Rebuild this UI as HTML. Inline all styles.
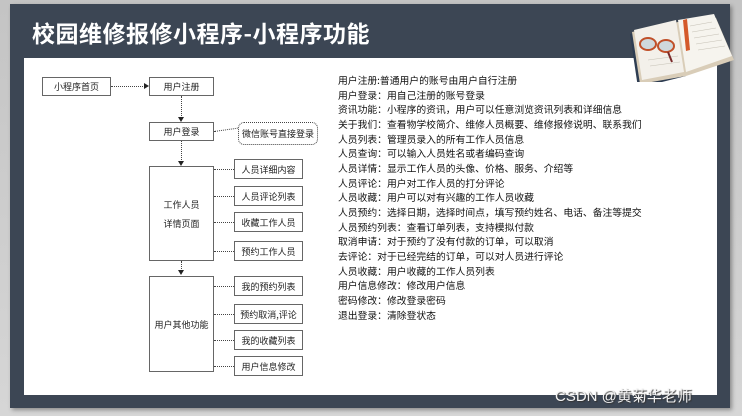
<!DOCTYPE html>
<html><head><meta charset="utf-8"><style>
*{margin:0;padding:0;box-sizing:border-box}
body{width:742px;height:416px;background:linear-gradient(#c4c4c4,#d6d6d6);position:relative;overflow:hidden;font-family:"Liberation Sans","Noto Sans CJK SC",sans-serif}
#slide{position:absolute;left:10px;top:4px;width:720px;height:404px;background:#3c4654;box-shadow:2px 2px 4px rgba(0,0,0,.35)}
#white{position:absolute;left:24px;top:58px;width:693px;height:337px;background:#fff}
h1{position:absolute;left:32px;top:17px;color:#fff;font-size:23px;font-weight:bold;letter-spacing:0.5px;font-family:"Noto Sans CJK SC",sans-serif;line-height:30px}
.b{position:absolute;border:1px solid #666;background:#fff;font-size:9px;color:#222;display:flex;align-items:center;justify-content:center;font-family:"Noto Sans CJK SC",sans-serif}
.h{position:absolute;border-top:1px dotted #444;height:0}
.v{position:absolute;border-left:1px dotted #444;width:0}
#txt{position:absolute;left:338px;top:73px;font-size:9.8px;line-height:14.65px;color:#111;font-family:"Noto Sans CJK SC",sans-serif;white-space:nowrap}
#wm{position:absolute;left:555px;top:385px;color:#f4f4f4;font-size:15px;text-shadow:1px 1px 1px #333;font-family:"Liberation Sans","Noto Sans CJK SC",sans-serif}
</style></head><body>
<div id="slide"></div>
<div id="white"></div>
<h1>校园维修报修小程序-小程序功能</h1>
<svg style="position:absolute;left:628px;top:10px" width="110" height="72" viewBox="0 0 110 72">
<polygon points="2,24 52,14 58,66 10,78" fill="#2e3d52"/>
<polygon points="4,22 50,12 88,8 106,50 58,66 12,74" fill="#d9cdb8"/>
<polygon points="6,20 48,10 56,62 14,70" fill="#f3f0ea"/>
<polygon points="50,10 86,4 104,46 58,62" fill="#f6f4ee"/>
<polygon points="55,10 59,9 62,40 58,41" fill="#d4592a"/>
<g stroke="#c5c0b5" stroke-width="0.6"><line x1="62" y1="16" x2="84" y2="12"/><line x1="64" y1="22" x2="88" y2="18"/><line x1="66" y1="28" x2="91" y2="24"/><line x1="68" y1="34" x2="94" y2="30"/><line x1="70" y1="40" x2="97" y2="36"/><line x1="20" y1="50" x2="50" y2="46"/><line x1="22" y1="56" x2="52" y2="52"/></g>
<ellipse cx="20" cy="34" rx="8" ry="6" fill="#cfd8dc" stroke="#c0502a" stroke-width="2"/>
<ellipse cx="38" cy="36" rx="8" ry="6" fill="#cfd8dc" stroke="#c0502a" stroke-width="2"/>
<line x1="40" y1="42" x2="44" y2="52" stroke="#7a2a2a" stroke-width="2"/>
</svg>

<div class="b" style="left:42px;top:77px;width:69px;height:19px">小程序首页</div>
<div class="h" style="left:111px;top:86px;width:36px"></div>
<div style="position:absolute;left:144px;top:83px;border-left:5px solid #222;border-top:3px solid transparent;border-bottom:3px solid transparent"></div>
<div class="b" style="left:149px;top:77px;width:65px;height:19px">用户注册</div>
<div class="v" style="left:181px;top:96px;height:22px"></div>
<div style="position:absolute;left:178px;top:117px;border-top:5px solid #222;border-left:3px solid transparent;border-right:3px solid transparent"></div>
<div class="b" style="left:149px;top:122px;width:65px;height:19px">用户登录</div>
<div class="h" style="left:214px;top:131px;width:24px;transform:rotate(-8deg);transform-origin:left"></div>
<div class="b" style="left:238px;top:122px;width:80px;height:23px;border:1px dotted #444;border-radius:6px">微信账号直接登录</div>
<div class="v" style="left:181px;top:141px;height:21px"></div>
<div style="position:absolute;left:178px;top:161px;border-top:5px solid #222;border-left:3px solid transparent;border-right:3px solid transparent"></div>
<div class="b" style="left:149px;top:166px;width:65px;height:95px;flex-direction:column;line-height:19px">工作人员<br>详情页面</div>
<div class="h" style="left:214px;top:169px;width:20px"></div>
<div class="h" style="left:214px;top:196px;width:20px"></div>
<div class="h" style="left:214px;top:222px;width:20px"></div>
<div class="h" style="left:214px;top:251px;width:20px"></div>
<div class="b" style="left:234px;top:159px;width:69px;height:20px">人员详细内容</div>
<div class="b" style="left:234px;top:186px;width:69px;height:20px">人员评论列表</div>
<div class="b" style="left:234px;top:212px;width:69px;height:20px">收藏工作人员</div>
<div class="b" style="left:234px;top:241px;width:69px;height:20px">预约工作人员</div>
<div class="v" style="left:181px;top:261px;height:10px"></div>
<div style="position:absolute;left:178px;top:270px;border-top:5px solid #222;border-left:3px solid transparent;border-right:3px solid transparent"></div>
<div class="b" style="left:149px;top:276px;width:65px;height:96px">用户其他功能</div>
<div class="h" style="left:214px;top:286px;width:20px"></div>
<div class="h" style="left:214px;top:314px;width:20px"></div>
<div class="h" style="left:214px;top:340px;width:20px"></div>
<div class="h" style="left:214px;top:366px;width:20px"></div>
<div class="b" style="left:234px;top:276px;width:69px;height:20px">我的预约列表</div>
<div class="b" style="left:234px;top:304px;width:69px;height:20px">预约取消,评论</div>
<div class="b" style="left:234px;top:330px;width:69px;height:20px">我的收藏列表</div>
<div class="b" style="left:234px;top:356px;width:69px;height:20px">用户信息修改</div>

<div id="txt">用户注册:普通用户的账号由用户自行注册<br>用户登录：用自己注册的账号登录<br>资讯功能：小程序的资讯，用户可以任意浏览资讯列表和详细信息<br>关于我们：查看物学校简介、维修人员概要、维修报修说明、联系我们<br>人员列表：管理员录入的所有工作人员信息<br>人员查询：可以输入人员姓名或者编码查询<br>人员详情：显示工作人员的头像、价格、服务、介绍等<br>人员评论：用户对工作人员的打分评论<br>人员收藏：用户可以对有兴趣的工作人员收藏<br>人员预约：选择日期，选择时间点，填写预约姓名、电话、备注等提交<br>人员预约列表：查看订单列表，支持模拟付款<br>取消申请：对于预约了没有付款的订单，可以取消<br>去评论：对于已经完结的订单，可以对人员进行评论<br>人员收藏：用户收藏的工作人员列表<br>用户信息修改：修改用户信息<br>密码修改：修改登录密码<br>退出登录：清除登状态</div>
<div id="wm">CSDN @黄菊华老师</div>
</body></html>
